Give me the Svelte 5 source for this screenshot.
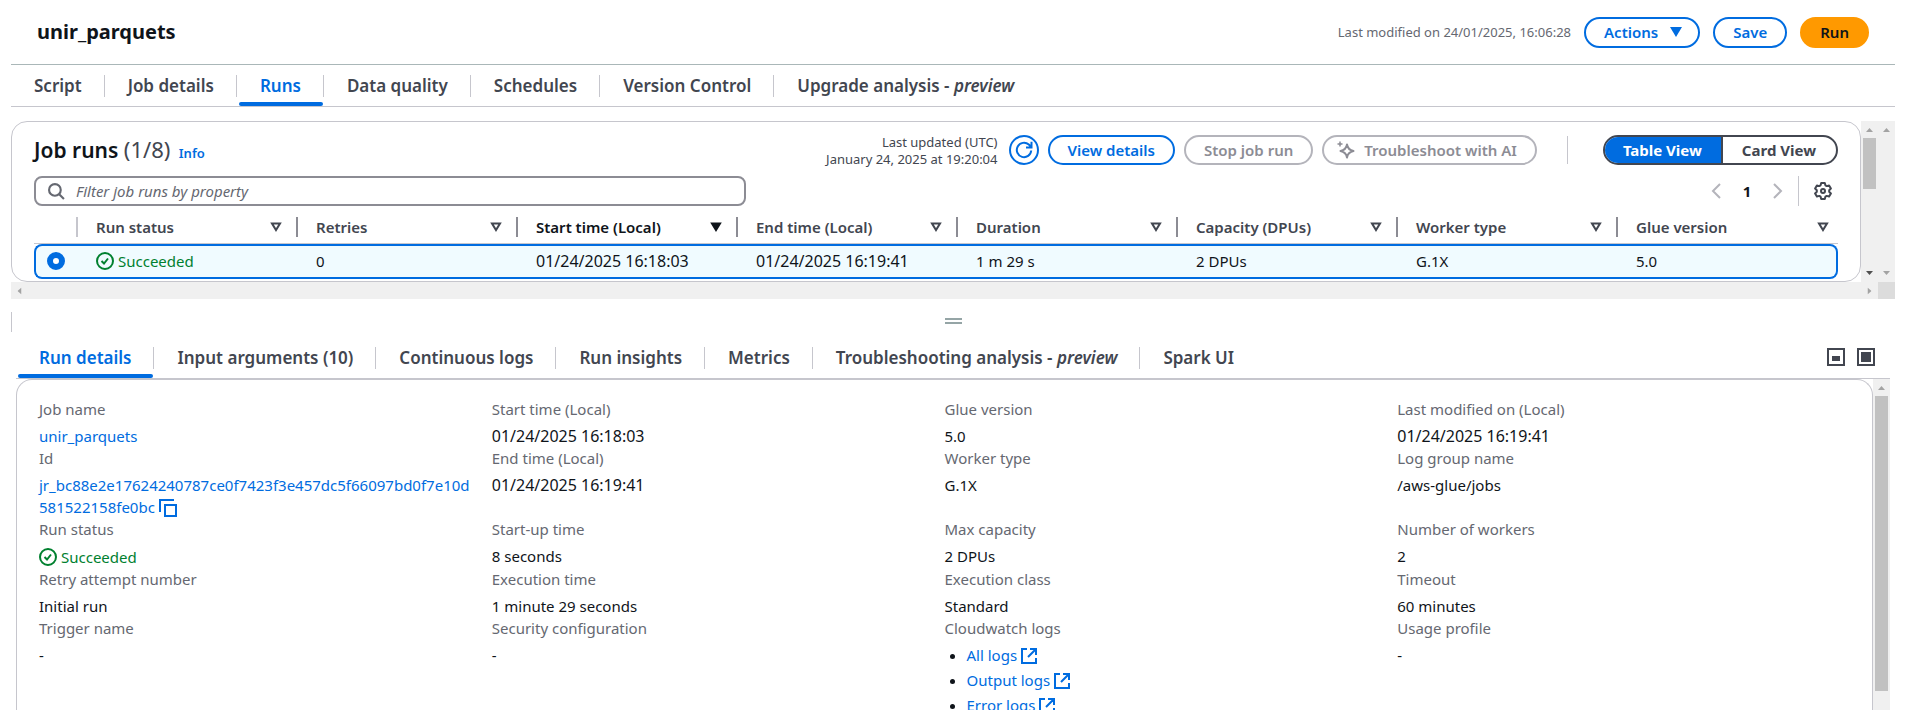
<script>
  const mainTabs = [
    { label: 'Script' },
    { label: 'Job details' },
    { label: 'Runs', active: true },
    { label: 'Data quality' },
    { label: 'Schedules' },
    { label: 'Version Control' },
    { label: 'Upgrade analysis - ', note: 'preview' }
  ];
  const detailTabs = [
    { label: 'Run details', active: true },
    { label: 'Input arguments (10)' },
    { label: 'Continuous logs' },
    { label: 'Run insights' },
    { label: 'Metrics' },
    { label: 'Troubleshooting analysis - ', note: 'preview' },
    { label: 'Spark UI' }
  ];
  const columns = [
    { name: 'Run status', value: 'Succeeded', status: true },
    { name: 'Retries', value: '0' },
    { name: 'Start time (Local)', value: '01/24/2025 16:18:03', sorted: true, stamp: true },
    { name: 'End time (Local)', value: '01/24/2025 16:19:41', stamp: true },
    { name: 'Duration', value: '1 m 29 s' },
    { name: 'Capacity (DPUs)', value: '2 DPUs' },
    { name: 'Worker type', value: 'G.1X' },
    { name: 'Glue version', value: '5.0' }
  ];
  const details = [
    { label: 'Job name', value: 'unir_parquets', kind: 'link' },
    { label: 'Start time (Local)', value: '01/24/2025 16:18:03', kind: 'stamp' },
    { label: 'Glue version', value: '5.0' },
    { label: 'Last modified on (Local)', value: '01/24/2025 16:19:41', kind: 'stamp' },
    { label: 'Id', value: 'jr_bc88e2e17624240787ce0f7423f3e457dc5f66097bd0f7e10d581522158fe0bc', kind: 'id' },
    { label: 'End time (Local)', value: '01/24/2025 16:19:41', kind: 'stamp' },
    { label: 'Worker type', value: 'G.1X' },
    { label: 'Log group name', value: '/aws-glue/jobs' },
    { label: 'Run status', value: 'Succeeded', kind: 'status' },
    { label: 'Start-up time', value: '8 seconds' },
    { label: 'Max capacity', value: '2 DPUs' },
    { label: 'Number of workers', value: '2' },
    { label: 'Retry attempt number', value: 'Initial run' },
    { label: 'Execution time', value: '1 minute 29 seconds' },
    { label: 'Execution class', value: 'Standard' },
    { label: 'Timeout', value: '60 minutes' },
    { label: 'Trigger name', value: '-' },
    { label: 'Security configuration', value: '-' },
    { label: 'Cloudwatch logs', kind: 'logs', items: ['All logs', 'Output logs', 'Error logs'] },
    { label: 'Usage profile', value: '-' }
  ];
</script>

{#snippet tabList(tabs, label)}
  <div class="tabs" role="tablist" aria-label={label}>
    {#each tabs as tab}
      <div class="tab" class:active={tab.active}>
        <button role="tab" aria-selected={!!tab.active}>{tab.label}{#if tab.note}<em>{tab.note}</em>{/if}</button>
      </div>
    {/each}
  </div>
{/snippet}

{#snippet success(text)}
  <span class="success">
    <svg width="18" height="18" viewBox="0 0 18 18" fill="none" stroke="currentColor" stroke-width="2" aria-hidden="true">
      <circle cx="9" cy="9" r="8" /><path d="m5.500 9 2.500 2.500 4-5" />
    </svg>{text}
  </span>
{/snippet}

{#snippet arrow(dir, dark)}
  <svg class="arrow {dir}" class:dark width="7" height="4" viewBox="0 0 7 4" aria-hidden="true"><path d="M0 4 3.500 0 7 4z" /></svg>
{/snippet}

<main>
  <header>
    <h1>unir_parquets</h1>
    <div class="header-actions">
      <span class="modified">Last modified on 24/01/2025, 16:06:28</span>
      <button class="btn menu">Actions
        <svg class="caret" width="12" height="10" viewBox="0 0 12 10" aria-hidden="true"><path d="M0 0h12L6 10z" fill="currentColor" /></svg>
      </button>
      <button class="btn">Save</button>
      <button class="btn primary">Run</button>
    </div>
  </header>

  <nav class="main-nav">{@render tabList(mainTabs, 'Job')}</nav>

  <div class="runs-pane">
    <div class="pane-row">
      <section class="runs">
        <div class="toolbar">
          <h2>Job runs <span class="count">(1/8)</span> <a class="info" href="#info">Info</a></h2>
          <div class="tools">
            <p class="updated">Last updated (UTC)<br />January 24, 2025 at 19:20:04</p>
            <button class="btn round" aria-label="Refresh">
              <svg width="18" height="18" viewBox="0 0 18 18" fill="none" stroke="currentColor" stroke-width="2" aria-hidden="true">
                <path d="M16.200 9.500A7.200 7.200 0 1 1 13.800 3.600l2.200 2.200M16.500.800V6.500H11" />
              </svg>
            </button>
            <button class="btn">View details</button>
            <button class="btn" disabled>Stop job run</button>
            <button class="btn with-icon" disabled>
              <svg width="18" height="18" viewBox="0 0 18 18" fill="none" stroke="currentColor" stroke-width="2" aria-hidden="true">
                <path d="M10 3.500Q10.800 8.700 16.500 10 10.800 11.300 10 16.500 9.200 11.300 3.500 10 9.200 8.700 10 3.500z" stroke-linejoin="round" />
                <path d="M3 .5v5M.5 3h5" stroke-width="1.500" />
              </svg>Troubleshoot with AI
            </button>
            <span class="rule"></span>
            <div class="segmented">
              <button class="chosen" aria-pressed="true">Table View</button>
              <button aria-pressed="false">Card View</button>
            </div>
          </div>
        </div>

        <div class="filters">
          <label class="search">
            <svg width="17" height="17" viewBox="0 0 16 16" fill="none" stroke="currentColor" stroke-width="2" aria-hidden="true">
              <circle cx="6.500" cy="6.500" r="5.500" /><path d="m10.500 10.500 4.500 4.500" />
            </svg>
            <input type="text" placeholder="Filter job runs by property" aria-label="Filter job runs by property" />
          </label>
          <div class="pager">
            <button class="icon-btn" disabled aria-label="Previous page">
              <svg width="10" height="16" viewBox="0 0 10 16" fill="none" stroke="currentColor" stroke-width="2"><path d="M9 1 2 8l7 7" /></svg>
            </button>
            <button class="page">1</button>
            <button class="icon-btn" disabled aria-label="Next page">
              <svg width="10" height="16" viewBox="0 0 10 16" fill="none" stroke="currentColor" stroke-width="2"><path d="m1 1 7 7-7 7" /></svg>
            </button>
            <span class="pager-rule"></span>
            <button class="icon-btn gear" aria-label="Preferences">
              <svg width="18" height="18" viewBox="0 0 18 18" fill="none" stroke="currentColor" stroke-width="2" stroke-linejoin="round">
                <path d="M7.200 1h3.600l.6 2.300 1.400.8 2.300-.7 1.800 3.100L15.200 8.200v1.600l1.700 1.700-1.800 3.100-2.300-.7-1.400.8-.6 2.300H7.200l-.6-2.300-1.400-.8-2.300.7-1.800-3.100 1.700-1.700V8.200L1.100 6.500l1.800-3.100 2.300.7 1.400-.8z" />
                <circle cx="9" cy="9" r="2" />
              </svg>
            </button>
          </div>
        </div>

        <table>
          <thead>
            <tr>
              <th class="pick"><span></span></th>
              {#each columns as col}
                <th class:sorted={col.sorted}>
                  <div class="head">
                    <span>{col.name}</span>
                    <svg width="12" height="10" viewBox="0 0 12 10" aria-hidden="true">
                      <path d="M2 1.500h8L6 8z" fill={col.sorted ? 'currentColor' : 'none'} stroke="currentColor" stroke-width="2" />
                    </svg>
                  </div>
                </th>
              {/each}
            </tr>
          </thead>
          <tbody>
            <tr>
              <td class="pick"><input type="radio" name="run" checked aria-label="Select run" /></td>
              {#each columns as col}
                <td class:stamp={col.stamp}>{#if col.status}{@render success(col.value)}{:else}{col.value}{/if}</td>
              {/each}
            </tr>
          </tbody>
        </table>
      </section>
      <div class="vbar">
        {@render arrow('up', false)}
        <div class="track"><div class="thumb"></div></div>
        {@render arrow('down', true)}
      </div>
      <div class="vbar">
        {@render arrow('up', false)}
        <div class="track"></div>
        {@render arrow('down', false)}
      </div>
    </div>
    <div class="hbar">
      <div class="hrail">{@render arrow('left', false)}{@render arrow('right', false)}</div>
      <div class="corner"></div>
    </div>
  </div>

  <div class="splitter">
    <div class="grip"></div>
  </div>

  <div class="detail-pane">
    <div class="detail-nav">
      {@render tabList(detailTabs, 'Run')}
      <div class="window-tools">
        <button class="icon-btn" aria-label="Half panel">
          <svg width="18" height="18" viewBox="0 0 18 18"><path d="M1 1h16v16H1z" fill="none" stroke="currentColor" stroke-width="2" /><path d="M5 8h8v5H5z" fill="currentColor" /></svg>
        </button>
        <button class="icon-btn" aria-label="Full panel">
          <svg width="18" height="18" viewBox="0 0 18 18"><path d="M1 1h16v16H1z" fill="none" stroke="currentColor" stroke-width="2" /><path d="M4 4h10v10H4z" fill="currentColor" /></svg>
        </button>
      </div>
    </div>
    <div class="detail-body">
      <section class="details">
        {#each details as item}
          <div class="field">
            <div class="label">{item.label}</div>
            <div class="value" class:stamp={item.kind === 'stamp'}>
              {#if item.kind === 'link'}
                <a href="#job">{item.value}</a>
              {:else if item.kind === 'id'}
                <a href="#run">{item.value}</a>
                <button class="copy" aria-label="Copy id">
                  <svg width="18" height="18" viewBox="0 0 18 18" fill="none" stroke="currentColor" stroke-width="2"><path d="M1 13V1h14M6 6h11v11H6z" /></svg>
                </button>
              {:else if item.kind === 'status'}
                {@render success(item.value)}
              {:else if item.kind === 'logs'}
                <ul>
                  {#each item.items as log}
                    <li>
                      <a href="#logs">{log}
                        <svg class="ext" width="16" height="16" viewBox="0 0 16 16" fill="none" stroke="currentColor" stroke-width="2" aria-hidden="true"><path d="M6 1H1v14h14v-5M9 1h6v6M14.500 1.500 7 9" /></svg></a>
                    </li>
                  {/each}
                </ul>
              {:else}
                {item.value}
              {/if}
            </div>
          </div>
        {/each}
      </section>
      <div class="vbar tall">
        {@render arrow('up', false)}
        <div class="track"><div class="thumb"></div></div>
      </div>
    </div>
  </div>
</main>

<style>
  :global(body) {
    margin: 0;
    background: #fff;
    overflow: hidden;
  }
  * {
    box-sizing: border-box;
  }
  main {
    display: flex;
    flex-direction: column;
    height: 100vh;
    padding: 0 17px 0 11px;
    font: 15px/22px 'Noto Sans', 'Open Sans', sans-serif;
    color: #0f141a;
  }
  button {
    font: inherit;
    color: inherit;
    border: 0;
    background: none;
    padding: 0;
    margin: 0;
  }
  a {
    color: #006ce0;
    text-decoration: none;
  }
  svg {
    flex: none;
  }
  h1, h2, p, ul {
    margin: 0;
  }

  header {
    flex: none;
    display: flex;
    align-items: center;
    justify-content: space-between;
    height: 65px;
    padding: 0 26px;
    border-bottom: 1px solid #aab7b8;
  }
  h1 {
    font-size: 20px;
    line-height: 24px;
    font-weight: 700;
  }
  .header-actions {
    display: flex;
    align-items: center;
    gap: 13px;
  }
  .modified {
    font-size: 13px;
    color: #656871;
  }
  .btn {
    display: inline-flex;
    align-items: center;
    justify-content: center;
    height: 31px;
    padding: 0 18px;
    border: 2px solid #006ce0;
    border-radius: 16px;
    font-weight: 600;
    color: #006ce0;
    white-space: nowrap;
  }
  .btn.menu {
    gap: 12px;
    padding-right: 16px;
  }
  .btn.primary {
    border-color: #ff9900;
    background: #ff9900;
    color: #0f141a;
  }
  .btn:disabled {
    border-color: #b4b4bb;
    color: #8c8c94;
  }
  .tools .btn {
    height: 30px;
  }
  .btn.round {
    width: 30px;
    padding: 0;
  }
  .btn.with-icon {
    gap: 9px;
    padding-left: 13px;
  }

  .main-nav {
    flex: none;
    border-bottom: 1px solid #c6c6cd;
    margin-bottom: 14px;
  }
  .tabs {
    display: flex;
    align-items: stretch;
    height: 41px;
  }
  .tab {
    display: flex;
    align-items: center;
    position: relative;
    font-size: 17px;
    font-weight: 600;
    color: #424650;
    white-space: nowrap;
  }
  .tab button {
    padding: 0 22px 0 23px;
    height: 22px;
    border-right: 1px solid #c6c6cd;
  }
  .tab:last-child button {
    border-right: 0;
  }
  .tab.active {
    color: #006ce0;
  }
  .tab.active::after {
    content: '';
    position: absolute;
    left: 2px;
    right: 1px;
    bottom: 0;
    height: 4px;
    border-radius: 4px;
    background: #006ce0;
  }

  .runs-pane {
    flex: none;
  }
  .pane-row {
    display: flex;
  }
  .runs {
    flex: 1;
    min-width: 0;
    border: 1px solid #c6c6cd;
    border-radius: 16px;
    padding: 13px 22px 2px;
  }
  .toolbar, .filters {
    display: flex;
    align-items: center;
    justify-content: space-between;
  }
  h2 {
    padding-top: 2px;
    font-size: 21px;
    line-height: 24px;
    font-weight: 600;
  }
  .count {
    font-size: 22px;
    font-weight: 400;
    color: #424650;
  }
  .info {
    margin-left: 3px;
    font-size: 13px;
    font-weight: 600;
  }
  .tools {
    display: flex;
    align-items: center;
    gap: 9px;
    height: 30px;
  }
  .updated {
    padding-top: 2px;
    font-size: 13px;
    line-height: 17px;
    text-align: right;
    color: #424650;
    margin-right: 2px;
  }
  .rule {
    width: 1px;
    height: 28px;
    margin: 0 26px 0 21px;
    background: #c6c6cd;
  }
  .segmented {
    display: flex;
    height: 30px;
    border: 2px solid #424650;
    border-radius: 15px;
    overflow: hidden;
    font-weight: 700;
    color: #424650;
  }
  .segmented button {
    padding: 0 20px 0 19px;
  }
  .segmented .chosen {
    padding: 0 19px 0 18px;
    background: #006ce0;
    color: #fff;
    border-right: 2px solid #424650;
  }
  .filters {
    margin: 11px 0 7px;
  }
  .search {
    display: flex;
    align-items: center;
    gap: 11px;
    width: 712px;
    height: 30px;
    padding: 0 12px;
    border: 2px solid #8c8c94;
    border-radius: 8px;
    color: #656871;
  }
  .search input {
    flex: 1;
    min-width: 0;
    border: 0;
    padding: 0;
    outline: 0;
    background: none;
    font: inherit;
  }
  .search input::placeholder {
    color: #656871;
    font-style: italic;
    opacity: 1;
  }
  .pager {
    display: flex;
    align-items: center;
    height: 30px;
    padding-right: 6px;
  }
  .icon-btn {
    display: flex;
    color: #424650;
  }
  .icon-btn:disabled {
    color: #b4b4bb;
  }
  .page {
    width: 52px;
    font-weight: 700;
  }
  .pager-rule {
    width: 1px;
    height: 30px;
    margin: 0 15px;
    background: #c6c6cd;
  }

  table {
    width: 100%;
    table-layout: fixed;
    border-collapse: separate;
    border-spacing: 0;
  }
  th {
    height: 31px;
    padding: 0;
    border-bottom: 1px solid #c6c6cd;
    text-align: left;
    font-weight: 600;
    color: #424650;
  }
  th.sorted {
    color: #0f141a;
  }
  .head {
    display: flex;
    align-items: center;
    justify-content: space-between;
    height: 20px;
    margin-bottom: 3px;
    padding: 0 14px 0 18px;
    border-right: 2px solid #8c8c94;
  }
  th:last-child .head {
    padding-right: 9px;
    border-right: 0;
  }
  th.pick {
    width: 44px;
  }
  th.pick span {
    display: block;
    height: 20px;
    margin-bottom: 3px;
    border-right: 2px solid #c6c6cd;
  }
  td {
    height: 35px;
    padding: 0 0 2px 18px;
    background: #f0fbff;
    border: solid #006ce0;
    border-width: 2px 0;
  }
  td.pick {
    padding: 0 0 2px 11px;
    border-left-width: 2px;
    border-radius: 8px 0 0 8px;
  }
  td:last-child {
    border-right-width: 2px;
    border-radius: 0 8px 8px 0;
  }
  input[type='radio'] {
    display: block;
    appearance: none;
    width: 18px;
    height: 18px;
    margin: 0;
    border: 6px solid #006ce0;
    border-radius: 50%;
    background: #fff;
  }
  .stamp {
    font-size: 16px;
  }
  .success {
    display: flex;
    align-items: center;
    gap: 4px;
    color: #00802f;
  }

  .vbar {
    flex: none;
    display: flex;
    flex-direction: column;
    align-items: center;
    width: 17px;
    padding: 7px 0;
    background: #f0f0f0;
  }
  .track {
    flex: 1;
    width: 13px;
    margin: 6px 0;
  }
  .thumb {
    height: 51px;
    background: #c1c1c1;
  }
  .arrow {
    fill: #a3a3a3;
  }
  .arrow.dark {
    fill: #505050;
  }
  .arrow.down {
    transform: rotate(180deg);
  }
  .arrow.left {
    transform: rotate(-90deg);
  }
  .arrow.right {
    transform: rotate(90deg);
  }
  .hbar {
    display: flex;
    height: 17px;
  }
  .hrail {
    flex: 1;
    display: flex;
    align-items: center;
    justify-content: space-between;
    padding: 0 5px;
    background: #f0f0f0;
  }
  .corner {
    width: 17px;
    background: #dcdcdc;
  }

  .splitter {
    flex: none;
    display: flex;
    align-items: center;
    justify-content: center;
    height: 20px;
    margin: 13px 0 5px;
    border-left: 1px solid #c6c6cd;
  }
  .grip {
    width: 17px;
    height: 6px;
    margin-bottom: 2px;
    border: solid #95a5a6;
    border-width: 2px 0;
  }

  .detail-pane {
    flex: 1;
    min-height: 0;
    display: flex;
    flex-direction: column;
    padding: 0 5px;
  }
  .detail-nav {
    flex: none;
    display: flex;
    align-items: center;
    justify-content: space-between;
    padding-right: 15px;
    border-bottom: 1px solid #c6c6cd;
  }
  .window-tools {
    display: flex;
    gap: 12px;
    padding-bottom: 2px;
  }
  .detail-body {
    flex: 1;
    min-height: 0;
    display: flex;
  }
  .details {
    flex: 1;
    min-width: 0;
    display: grid;
    grid-template-columns: repeat(4, 1fr);
    align-content: start;
    padding: 18px 22px;
    border: 1px solid #c6c6cd;
    border-bottom: 0;
    border-radius: 16px 16px 0 0;
    overflow: hidden;
  }
  .label {
    color: #656871;
    margin-bottom: 5px;
  }
  .value {
    overflow-wrap: anywhere;
    word-break: break-all;
    padding-right: 18px;
  }
  .value .success {
    min-height: 23px;
  }
  .copy {
    height: 18px;
    vertical-align: -4px;
    color: #006ce0;
  }
  .copy svg {
    display: block;
  }
  ul {
    padding-left: 22px;
  }
  li {
    margin-bottom: 3px;
  }
  .ext {
    vertical-align: -3px;
  }
  .tall .thumb {
    height: 295px;
  }
</style>
